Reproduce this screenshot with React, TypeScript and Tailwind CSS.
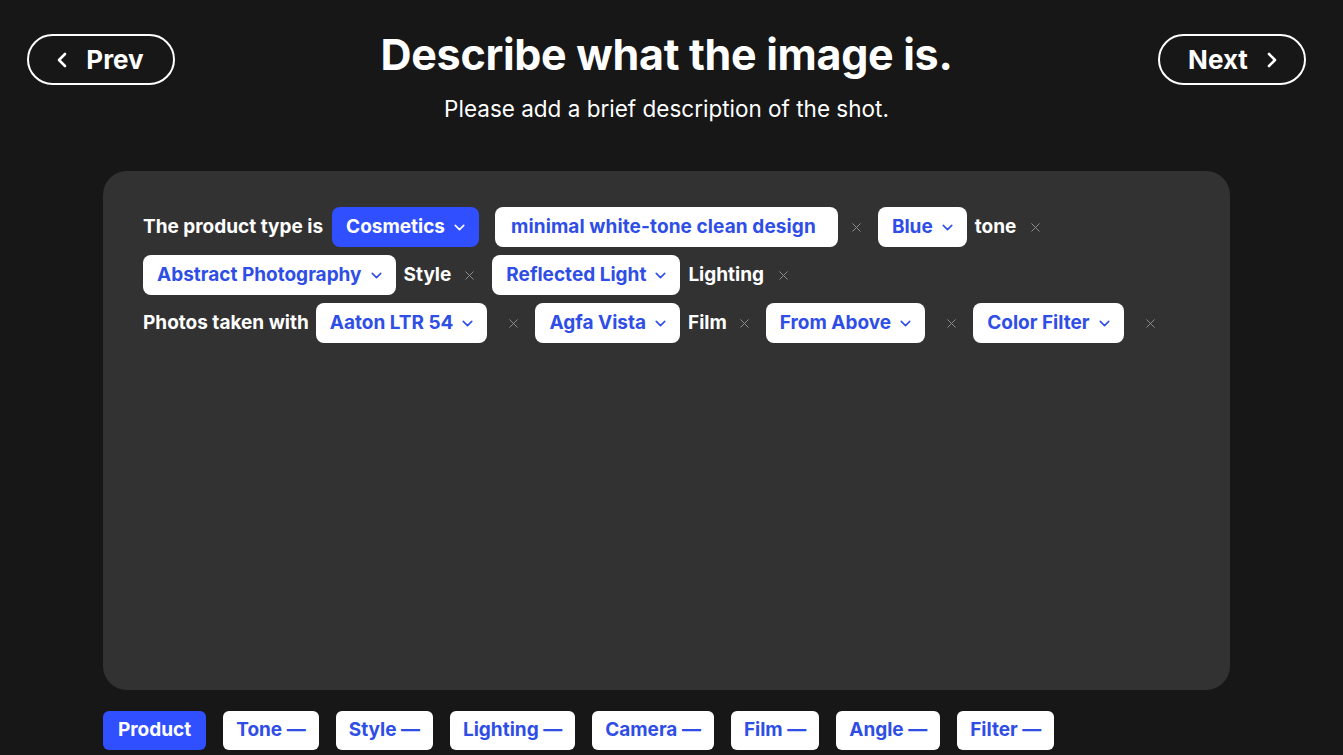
import { ChevronLeft, ChevronRight, ChevronDown, X } from "lucide-react";

const font = { fontFamily: "Inter, 'Noto Sans', sans-serif" };

// A dropdown chip inside the description panel
const Chip = ({ label, active = false }: { label: string; active?: boolean }) => (
  <div
    className={`flex h-[40px] items-center gap-[6px] rounded-[8px] pl-[14px] pr-[11px] text-[19px] font-bold ${
      active ? "bg-[#3050ff] text-white" : "bg-white text-[#2f4ee6]"
    }`}
  >
    <span>{label}</span>
    <ChevronDown size={17} strokeWidth={2.2} />
  </div>
);

const Word = ({ children }: { children: string }) => (
  <span className="text-[19px] font-bold text-white">{children}</span>
);

const Remove = ({ ml = "ml-[12px]", mr = "mr-[14px]" }: { ml?: string; mr?: string }) => (
  <span className={`flex items-center text-[#8c8c8c] ${ml} ${mr}`}>
    <X size={15} strokeWidth={1.6} />
  </span>
);

const tabs = ["Product", "Tone", "Style", "Lighting", "Camera", "Film", "Angle", "Filter"];

export default function App() {
  return (
    <div className="min-h-[755px] w-full bg-[#171717]" style={font}>
      <div className="w-[1333px]">
        <header className="flex items-start justify-between px-[27px] pt-[34px]">
          <button className="flex h-[51px] w-[148px] items-center justify-center gap-[12px] rounded-full border-2 border-white text-[26px] font-bold text-white">
            <ChevronLeft size={24} strokeWidth={2.6} className="-ml-[8px]" />
            <span>Prev</span>
          </button>
          <div className="flex flex-col items-center">
            <h1 className="-mt-[8px] text-[43px] font-bold leading-[56px] tracking-[-0.3px] text-white">
              Describe what the image is.
            </h1>
            <p className="mt-[12px] text-[22.5px] font-normal leading-[30px] text-white">
              Please add a brief description of the shot.
            </p>
          </div>
          <button className="flex h-[51px] w-[148px] items-center justify-center gap-[12px] rounded-full border-2 border-white text-[26px] font-bold text-white">
            <span>Next</span>
            <ChevronRight size={24} strokeWidth={2.6} className="-mr-[8px]" />
          </button>
        </header>

        <section className="mx-[103px] mt-[47px] h-[519px] rounded-[24px] bg-[#323232] px-[40px] pt-[36px]">
          <div className="flex flex-col gap-[8px]">
            <div className="flex items-center">
              <Word>The product type is</Word>
              <span className="ml-[9px]" />
              <Chip label="Cosmetics" active />
              <div className="ml-[16px] flex h-[40px] items-center rounded-[8px] bg-white pl-[16px] pr-[22px] text-[19px] font-bold tracking-[0.1px] text-[#2f4ee6]">
                minimal white-tone clean design
              </div>
              <Remove ml="ml-[11px]" mr="mr-[14px]" />
              <Chip label="Blue" />
              <span className="ml-[8px]" />
              <Word>tone</Word>
              <Remove ml="ml-[12px]" mr="mr-0" />
            </div>
            <div className="flex items-center">
              <Chip label="Abstract Photography" />
              <span className="ml-[8px]" />
              <Word>Style</Word>
              <Remove ml="ml-[11px]" mr="mr-[15px]" />
              <Chip label="Reflected Light" />
              <span className="ml-[8px]" />
              <Word>Lighting</Word>
              <Remove ml="ml-[12px]" mr="mr-0" />
            </div>
            <div className="flex items-center">
              <Word>Photos taken with</Word>
              <span className="ml-[7px]" />
              <Chip label="Aaton LTR 54" />
              <Remove ml="ml-[19px]" mr="mr-[14px]" />
              <Chip label="Agfa Vista" />
              <span className="ml-[8px]" />
              <Word>Film</Word>
              <Remove ml="ml-[10px]" mr="mr-[14px]" />
              <Chip label="From Above" />
              <Remove ml="ml-[19px]" mr="mr-[14px]" />
              <Chip label="Color Filter" />
              <Remove ml="ml-[19px]" mr="mr-0" />
            </div>
          </div>
        </section>

        <nav className="mx-[103px] mt-[21px] flex gap-[17px]">
          {tabs.map((t, i) => (
            <div
              key={t}
              className={`flex h-[39px] items-center rounded-[6px] text-[19px] font-bold ${
                i === 0 ? "bg-[#3050ff] px-[15px] text-white" : "bg-white px-[13px] text-[#2f4ee6]"
              }`}
            >
              {i === 0 ? t : `${t} —`}
            </div>
          ))}
        </nav>
      </div>
    </div>
  );
}
